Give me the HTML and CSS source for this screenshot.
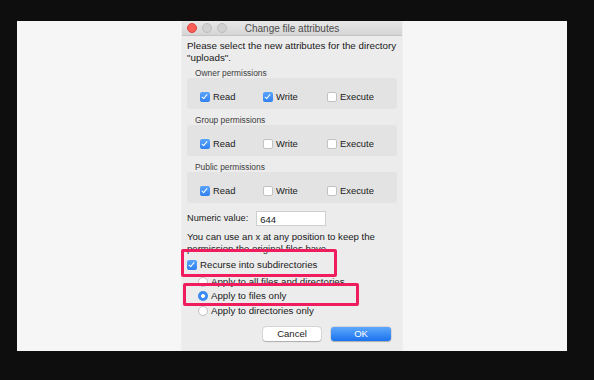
FILE: index.html
```html
<!DOCTYPE html>
<html lang="en">
<head>
    <meta charset="UTF-8">
    <meta name="viewport" content="width=device-width, initial-scale=1.0">
    <title>Change file attributes</title>
    <link rel="stylesheet" href="styles.css">
</head>
<body>
    <div class="stage">
        <div class="dialog">
            <div class="titlebar">
                <div class="lights">
                    <span class="light close"></span>
                    <span class="light"></span>
                    <span class="light"></span>
                </div>
                <div class="title">Change file attributes</div>
                <div></div>
            </div>

            <div class="content">
                <p class="intro">Please select the new attributes for the directory<br>"uploads".</p>

                <div class="group">
                    <div class="group-label">Owner permissions</div>
                    <div class="group-box">
                        <label class="opt"><span class="check on"></span>Read</label>
                        <label class="opt"><span class="check on"></span>Write</label>
                        <label class="opt"><span class="check"></span>Execute</label>
                    </div>
                </div>
                <div class="group">
                    <div class="group-label">Group permissions</div>
                    <div class="group-box">
                        <label class="opt"><span class="check on"></span>Read</label>
                        <label class="opt"><span class="check"></span>Write</label>
                        <label class="opt"><span class="check"></span>Execute</label>
                    </div>
                </div>
                <div class="group">
                    <div class="group-label">Public permissions</div>
                    <div class="group-box">
                        <label class="opt"><span class="check on"></span>Read</label>
                        <label class="opt"><span class="check"></span>Write</label>
                        <label class="opt"><span class="check"></span>Execute</label>
                    </div>
                </div>

                <div class="numeric">
                    <span>Numeric value:</span>
                    <div class="input">644</div>
                </div>

                <p class="hint">You can use an x at any position to keep the permission the original files have.</p>

                <label class="row recurse"><span class="check on"></span>Recurse into subdirectories</label>
                <div class="radios">
                    <label class="row"><span class="radio"></span>Apply to all files and directories</label>
                    <label class="row"><span class="radio on"></span>Apply to files only</label>
                    <label class="row"><span class="radio"></span>Apply to directories only</label>
                </div>

                <div class="buttons">
                    <button class="btn">Cancel</button>
                    <button class="btn primary">OK</button>
                </div>
            </div>

            <!-- highlight boxes drawn on top of the dialog -->
            <div class="mark mark-recurse"></div>
            <div class="mark mark-files"></div>
        </div>
    </div>
</body>
</html>
```

FILE: styles.css
```css
body {
    margin: 0;
    background-color: #0e0e0e;
    font-family: "Liberation Sans", Arial, sans-serif;
    color: #1a1a1a;
}
.stage {
    width: 550px;
    height: 330px;
    margin: 21px 0 0 17px;
    background: #f6f6f6;
    display: flex;
    justify-content: center;
}
.dialog {
    position: relative;
    width: 220px;
    height: 330px;
    background: #ececec;
    box-shadow: 0 0 1px rgba(0, 0, 0, 0.15);
}
.titlebar {
    height: 14px;
    display: grid;
    grid-template-columns: 1fr auto 1fr;
    align-items: center;
    background: linear-gradient(#e8e8e8, #d5d5d5);
    border-bottom: 1px solid #c4c4c4;
}
.lights {
    display: flex;
    gap: 5px;
    padding-left: 5px;
}
.light {
    width: 8px;
    height: 8px;
    border-radius: 50%;
    background: #d2d2d2;
    border: 0.5px solid #bdbdbd;
}
.light.close {
    background: #fc5f57;
    border-color: #e0443e;
}
.title {
    font-size: 10px;
    color: #4d4d4d;
}
.content {
    padding: 4px 5px 0;
}
.intro {
    margin: 0;
    font-size: 9.8px;
    line-height: 12.3px;
}
.group {
    margin-bottom: 6px;
}
.group-label {
    font-size: 8.4px;
    line-height: 10px;
    color: #3d3d3d;
    padding-left: 8px;
}
.group:first-of-type .group-label {
    margin-top: 3px;
}
.group-box {
    height: 31px;
    box-sizing: border-box;
    padding: 8px 0 0 13px;
    display: grid;
    grid-template-columns: 63px 64px auto;
    background: #e3e3e3;
    border-radius: 3px;
}
.opt {
    display: flex;
    align-items: center;
    gap: 3px;
    font-size: 9.4px;
    line-height: 12px;
}
.check,
.radio {
    flex: none;
    width: 10px;
    height: 10px;
    box-sizing: border-box;
    background: #fff;
    border: 0.5px solid #c2c2c2;
    border-radius: 2px;
}
.check.on {
    border: none;
    background: linear-gradient(#5aa5fa, #2f80f1);
    position: relative;
}
.check.on::after {
    content: "";
    position: absolute;
    left: 3.4px;
    top: 1.2px;
    width: 2px;
    height: 5px;
    border: solid #fff;
    border-width: 0 1.4px 1.4px 0;
    transform: rotate(40deg);
}
.radio {
    border-radius: 50%;
}
.radio.on {
    border: none;
    background: radial-gradient(circle, #fff 0 1.7px, #3a8bf4 2.2px);
}
.numeric {
    display: flex;
    align-items: center;
    gap: 8px;
    margin-top: 8px;
    font-size: 9.2px;
}
.input {
    width: 70px;
    height: 15px;
    box-sizing: border-box;
    padding: 2px 3px;
    background: #fff;
    border: 0.5px solid #cfcfcf;
    font-size: 9.5px;
    line-height: 11px;
}
.hint {
    margin: 5px 0 0;
    font-size: 9.6px;
    line-height: 12px;
}
.row {
    display: flex;
    align-items: center;
    gap: 3px;
    font-size: 9.7px;
    line-height: 12px;
}
.recurse {
    margin-top: 4px;
}
.radios {
    margin-top: 5px;
    padding-left: 11px;
    display: flex;
    flex-direction: column;
    gap: 2.5px;
}
.buttons {
    display: flex;
    justify-content: flex-end;
    gap: 10px;
    margin-top: 10px;
    padding-right: 6px;
}
.btn {
    width: 58px;
    height: 14px;
    padding: 0;
    border: none;
    border-radius: 3px;
    font-family: inherit;
    font-size: 9.5px;
    color: #222;
    background: #fff;
    box-shadow: 0 0 0 0.5px rgba(0, 0, 0, 0.15), 0 0.5px 1px rgba(0, 0, 0, 0.2);
}
.btn.primary {
    width: 60px;
    color: #fff;
    background: linear-gradient(#5ea8fb, #1b72ef);
}
.mark {
    position: absolute;
    border: 3px solid #ef1d5d;
    border-radius: 2px;
}
.mark-recurse {
    left: -1px;
    top: 228px;
    width: 150px;
    height: 22px;
}
.mark-files {
    left: 1px;
    top: 262px;
    width: 170px;
    height: 17px;
}
```
